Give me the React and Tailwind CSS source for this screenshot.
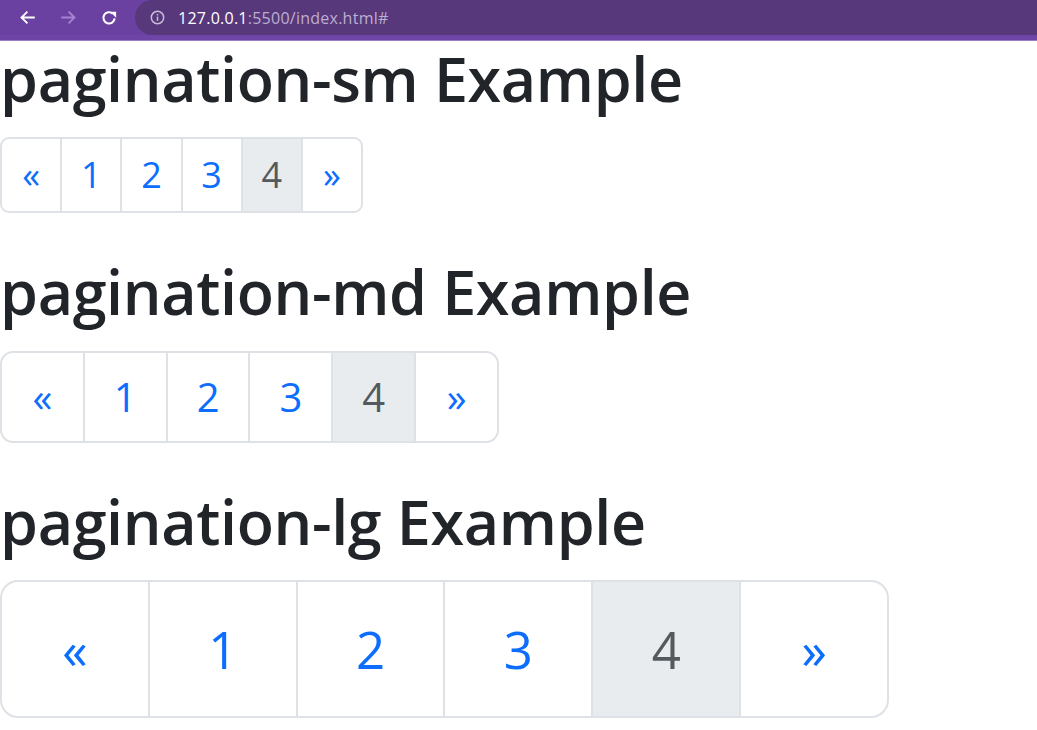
import React from "react";

const pages = ["«", "1", "2", "3", "4", "»"];

const sizes = {
  sm: { box: "w-[363px] h-[76px] rounded-[9px]", text: "text-[36px]" },
  md: { box: "w-[499px] h-[92px] rounded-[13px]", text: "text-[40px]" },
  lg: { box: "w-[889px] h-[138px] rounded-[18px]", text: "text-[51px]" },
};

function Pagination({ size }) {
  const s = sizes[size];
  return (
    <nav className={`flex overflow-hidden border-2 border-[#dee2e6] divide-x-2 divide-[#dee2e6] ${s.box}`}>
      {pages.map((p) => {
        const active = p === "4";
        const arrow = p === "«" || p === "»";
        return (
          <a
            key={p}
            href="#"
            className={`flex flex-1 items-center justify-center ${arrow ? "text-[0.8em]" : ""} ${active ? "bg-[#e9ecef] text-[#54595e]" : "text-[#0d6efd]"} ${s.text}`}
          >
            {p}
          </a>
        );
      })}
    </nav>
  );
}

function BrowserBar() {
  return (
    <div className="flex h-[41px] flex-col bg-[#6a40a0]">
      <div className="flex h-[35px] items-center">
        <div className="flex w-[135px] items-center">
          <svg className="ml-[19px]" width="17" height="17" viewBox="0 0 24 24" fill="none" stroke="#fff" strokeWidth="2.6" strokeLinecap="square">
            <path d="M21 12H4M11 4.5L3.5 12 11 19.5" />
          </svg>
          <svg className="ml-[24px]" width="17" height="17" viewBox="0 0 24 24" fill="none" stroke="#a583d0" strokeWidth="2.6" strokeLinecap="square">
            <path d="M3 12h17M13 4.5l7.5 7.5-7.5 7.5" />
          </svg>
          <svg className="ml-[23px]" width="18" height="18" viewBox="0 0 24 24" fill="none">
            <path d="M19.5 12.5A7.5 7.5 0 1 1 17 6.2" stroke="#fff" strokeWidth="2.8" />
            <path d="M13.5 3.5h8v8z" fill="#fff" />
          </svg>
        </div>
        <div className="flex h-full flex-1 items-center rounded-l-[18px] bg-[#57387b] pl-[15px]">
          <svg width="15" height="15" viewBox="0 0 16 16" fill="none">
            <circle cx="8" cy="8" r="6.6" stroke="#c9bcd9" strokeWidth="1.6" />
            <rect x="7.2" y="7" width="1.6" height="4.6" fill="#c9bcd9" />
            <rect x="7.2" y="4.2" width="1.6" height="1.6" fill="#c9bcd9" />
          </svg>
          <span className="ml-[13px] font-['Open_Sans',sans-serif] text-[16px] tracking-[0.25px]">
            <span className="text-white">127.0.0.1</span>
            <span className="text-[#bcaed0]">:5500/index.html#</span>
          </span>
        </div>
      </div>
      <div className="h-[5px] bg-[#6e45a6]" />
      <div className="h-px bg-[#9d80c4]" />
    </div>
  );
}

export default function App() {
  return (
    <div className="min-h-[730px] bg-white font-['Open_Sans',sans-serif]">
      <BrowserBar />
      <div className="flex flex-col items-start">
        <h1 className="mb-[20px] text-[61px] font-semibold leading-[76px] tracking-[-0.35px] text-[#212529]">pagination-sm Example</h1>
        <Pagination size="sm" />
        <h1 className="mb-[20px] mt-[40px] text-[61px] font-semibold leading-[78px] tracking-[-0.35px] text-[#212529]">pagination-md Example</h1>
        <Pagination size="md" />
        <h1 className="mb-[20px] mt-[40px] text-[61px] font-semibold leading-[77px] tracking-[-0.35px] text-[#212529]">pagination-lg Example</h1>
        <Pagination size="lg" />
      </div>
    </div>
  );
}
